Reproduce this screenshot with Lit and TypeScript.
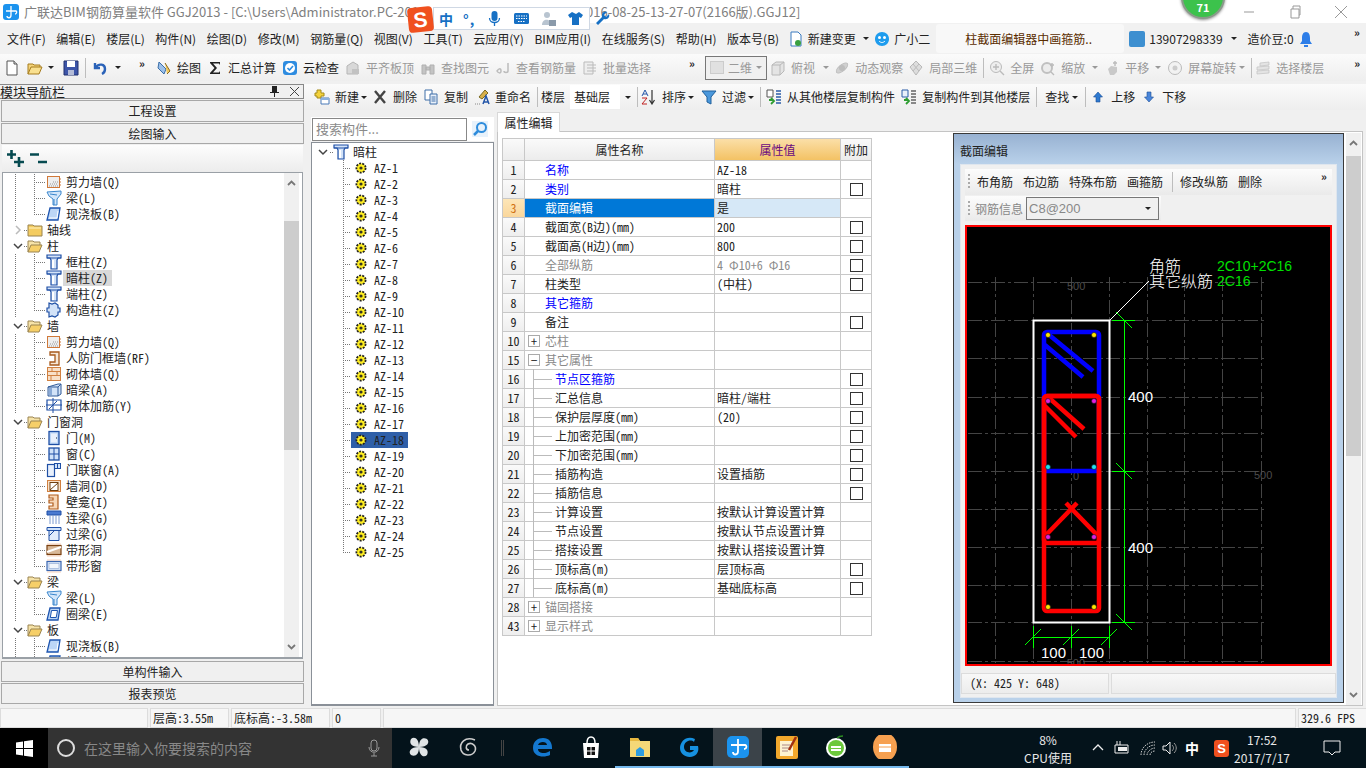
import { LitElement, html, css, svg } from "lit";
import { customElement } from "lit/decorators.js";

const icons: any = {
  doc: svg`<path d="M3 1h7l3 3v11H3z" fill="#fff" stroke="#555"/><path d="M10 1v3h3" fill="#ddd" stroke="#555"/>`,
  open: svg`<path d="M1 14V4h5l1 1h6v2" fill="#f5d47a" stroke="#a67c1e"/><path d="M1 14l3-7h11l-3 7z" fill="#f9e08f" stroke="#a67c1e"/>`,
  save: svg`<path d="M1 1h14v14H1z" fill="#3d55a8" stroke="#20306e"/><path d="M4 1h8v6H4z" fill="#fff"/><path d="M5 10h6v5H5z" fill="#b5bdd8"/>`,
  undo: svg`<path d="M3 3v5h5M3.500 7.500C7 3 13 4 13 9c0 2-1 4-3 5" fill="none" stroke="#2a62b8" stroke-width="2.400"/>`,
  draw: svg`<path d="M3 2l7 7-2 5-6-6z" fill="#9cc0ea" stroke="#3a6ea8"/><path d="M9 3l5 8-3 3" fill="#f0c860" stroke="#8a6a1e"/>`,
  cloud: svg`<rect x="1" y="1" width="14" height="14" rx="3" fill="#2e8ce0"/><circle cx="8" cy="8" r="5" fill="#fff"/><path d="M5.500 8l2 2 3.500-4" fill="none" stroke="#2e8ce0" stroke-width="1.600"/>`,
  gplate: svg`<path d="M2 14V6l6-4 5 3v9z" fill="#d8d8d8" stroke="#b5b5b5"/><path d="M7 9h7v5H7z" fill="#c2c2c2"/>`,
  gbino: svg`<path d="M2 5h4v9H2zM10 5h4v9h-4zM6 7h4v3H6z" fill="#c4c4c4" stroke="#b0b0b0"/>`,
  grebar: svg`<path d="M2 11c2-3 4-3 4 0s-3 2-4 0zM13 3v8c0 2-4 2-4 0" fill="none" stroke="#bcbcbc" stroke-width="1.500"/>`,
  gbatch: svg`<path d="M2 2h9v12H2z" fill="#eee" stroke="#bbb"/><path d="M5 5h9M5 8h9M5 11h9" stroke="#bbb"/>`,
  gcube: svg`<path d="M2 5l4-3h8v9l-4 4H2z" fill="#e4e4e4" stroke="#b8b8b8"/><path d="M2 5h8v10M10 5l4-3" fill="none" stroke="#b8b8b8"/>`,
  gorbit: svg`<ellipse cx="8" cy="8" rx="7" ry="3" transform="rotate(-40 8 8)" fill="#d0d0d0" stroke="#bbb"/><circle cx="8" cy="8" r="3" fill="#bdbdbd"/>`,
  gcube2: svg`<path d="M8 1l6 6-6 8-6-8z" fill="#ddd" stroke="#b8b8b8"/><path d="M5 4l6 7M11 4l-6 7" stroke="#bbb"/>`,
  gfull: svg`<circle cx="7" cy="7" r="5.500" fill="#eee" stroke="#bbb"/><path d="M4 7h6M7 4v6M11 11l4 4" stroke="#bbb" stroke-width="1.400"/>`,
  gzoom: svg`<circle cx="7" cy="8" r="5" fill="#ececec" stroke="#c0c0c0" stroke-width="2"/><path d="M11 12l3 3M12 3v4M10 5h4" stroke="#bbb" stroke-width="1.400"/>`,
  gpan: svg`<path d="M4 9l3-3 6 1v5l-3 3H6z" fill="#c9c9c9"/><path d="M11 1v5M9 3h4" stroke="#bbb" stroke-width="1.400"/>`,
  grot: svg`<circle cx="8" cy="8" r="6.500" fill="#f2f2f2" stroke="#bbb"/><circle cx="8" cy="8" r="2.500" fill="#ccc"/>`,
  gfloor: svg`<path d="M5 3l9-1v3l-9 1zM2 7l12-1v3L2 10zM2 11l12-1v3l-12 1z" fill="#e4e4e4" stroke="#c2c2c2" stroke-width=".7"/>`,
  add: svg`<path d="M3 1h4v3h3v3H7v2H3V7H1V4h2z" fill="#f4d23c" stroke="#a48a18"/><path d="M7 9h8v6H7z" fill="#fff" stroke="#4a7ab8"/><path d="M7 9h8v2H7z" fill="#8ab0de"/>`,
  del: svg`<path d="M3 2l10 12M13 2L3 14" stroke="#444" stroke-width="2.400"/>`,
  copy: svg`<path d="M2 1h7v10H2z" fill="#fff" stroke="#3f6fa8"/><path d="M7 5h7v10H7z" fill="#e8f0fa" stroke="#3f6fa8"/><path d="M8.500 8h4M8.500 10h4M8.500 12h4" stroke="#3f6fa8"/>`,
  rename: svg`<path d="M5 8l6-7 3 3-6 6z" fill="#d8b04a" stroke="#7a6a20"/><path d="M9 15l3-8 3 8M10 13h4" fill="none" stroke="#2456a8" stroke-width="1.500"/><path d="M1 15h6" stroke="#888" stroke-dasharray="1 1"/>`,
  sort: svg`<path d="M1 7l3-6 3 6M2 5h4" fill="none" stroke="#2456a8"/><path d="M1 9h5l-5 6h5" fill="none" stroke="#c02020"/><path d="M11 1v13M8.500 11l2.500 4 2.500-4" fill="none" stroke="#333" stroke-width="1.200"/>`,
  filter: svg`<path d="M1 2h14L10 8v7l-4-2V8z" fill="#4a98dc" stroke="#20609c"/>`,
  cpfrom: svg`<path d="M1 1h6v7H1z" fill="#fff" stroke="#555"/><path d="M3 11h4M5 9l3 3-3 3" fill="none" stroke="#2c9c30" stroke-width="1.800"/><path d="M10 2h5M10 5h5M10 8h5M10 11h5M10 14h5" stroke="#2a5ca8" stroke-width="1.500"/>`,
  cpto: svg`<path d="M1 1h6v7H1z" fill="#e8f0fa" stroke="#2a5ca8"/><path d="M3 11h4M5 9l3 3-3 3" fill="none" stroke="#2c9c30" stroke-width="1.800"/><path d="M10 2h5M10 5h5M10 8h5M10 11h5M10 14h5" stroke="#666" stroke-width="1.500"/>`,
  up: svg`<path d="M8 3l4.500 5H10v5H6V8H3.500z" fill="#2e7ad0" stroke="#1c4e96" stroke-width=".6"/>`,
  down: svg`<path d="M8 13l4.500-5H10V3H6v5H3.500z" fill="#4a86da" stroke="#1c4e96" stroke-width=".6"/>`,
  sigma: svg`<path d="M3 2h10v3l-1-1.500H6l4 4.500-4 4.500h6l1-1.500v3H3v-1l4.500-5L3 3z" fill="#222"/>`,
  col: svg`<path d="M1 1h14v3h-3L11 6v9H5V6L4 4H1z" fill="#d3e3f8" stroke="#1e4fa5" stroke-width="1.200"/><path d="M1 4h14" stroke="#1e4fa5"/><path d="M6 6h2v8H6z" fill="#fff"/>`,
  col2: svg`<path d="M3 1l3 1 3-1 3 2v3h2v4h-2v3l-3 2-3-1-3 1V10H1V6h2z" fill="#d3e3f8" stroke="#1e4fa5" stroke-width="1.200"/>`,
  wall: svg`<rect x="1.500" y="2.500" width="12" height="11" fill="#eee" stroke="#d07838"/><path d="M3 12h9M4 10h8M7 8h5" stroke="#999" stroke-dasharray="1 1"/><path d="M14 4v9" stroke="#d07838" stroke-dasharray="2 1"/>`,
  beam: svg`<path d="M1 2l14-1v3l-4 5v6H7V9L3 6z" fill="#d3e6fa" stroke="#3a86cc"/><path d="M4 4l7 1M8 9v6" stroke="#3a86cc"/>`,
  slab: svg`<path d="M4 2h10l-2 12H1z" fill="#bcd6f6" stroke="#1e55b0" stroke-width="1.300"/><path d="M3 12h8l1-7" fill="none" stroke="#fff"/>`,
  brick: svg`<rect x="1.500" y="1.500" width="13" height="13" fill="#f8e0c8" stroke="#d08040"/><path d="M1 5.500h14M1 9.500h14M6 1.500v4M11 5.500v4M5 9.500v5" stroke="#d08040"/>`,
  rf: svg`<path d="M4 2h9v13H4v-3h5V5H4z" fill="#f6e8d8" stroke="#a85a1c" stroke-width="1.300"/>`,
  box: svg`<path d="M2 5l10-3h3v10l-3 2H2z" fill="#d3e3f8" stroke="#315a98"/><path d="M2 5h10v9M12 5l3-3" fill="none" stroke="#315a98"/><path d="M3 6h3v7H3z" fill="#8aaad6"/>`,
  reb: svg`<path d="M1 2h14v10H1z" fill="#fff" stroke="#1e4fa5" stroke-width="1.200"/><path d="M0 7h16M7 0v15M3 11l8-8" stroke="#1e4fa5"/>`,
  door: svg`<rect x="3" y="1.500" width="10" height="13" fill="#bcd6f6" stroke="#1e4fa5" stroke-width="1.300"/><rect x="5" y="3.500" width="6" height="9" fill="#e8f0fc"/><path d="M10 8h1" stroke="#123"/>`,
  win: svg`<rect x="3" y="2" width="10" height="12" fill="#cfe2fa" stroke="#1e4fa5" stroke-width="1.300"/><path d="M8 2v12M3 8h10" stroke="#1e4fa5"/>`,
  dw: svg`<rect x="1.500" y="2.500" width="7" height="12" fill="#e8f0fc" stroke="#1e4fa5" stroke-width="1.200"/><rect x="8.500" y="1.500" width="6" height="5" fill="#cfe2fa" stroke="#1e4fa5"/><path d="M11.500 1.500v5" stroke="#1e4fa5"/>`,
  hole: svg`<rect x="1.500" y="2.500" width="13" height="11" fill="#f8e0c8" stroke="#d08040"/><rect x="4" y="4.500" width="8" height="8" fill="#fff" stroke="#704010"/><path d="M4 12l8-7" stroke="#704010"/>`,
  niche: svg`<path d="M3 1h9v14H3v-3h4V9H3V6h4V4H3z" fill="#f8d8b8" stroke="#b05c1c" stroke-width="1.200"/>`,
  lb: svg`<path d="M1 1h14v4H1z" fill="#4a7ad0" stroke="#1e4fa5"/><path d="M4 5v9M7 5v9M10 5v9M13 5v9" stroke="#7a9ad0"/>`,
  lintel: svg`<path d="M1 1.500h14v3H1z" fill="#cfe2fa" stroke="#1e4fa5"/><path d="M3 4.500h10v10H3z" fill="#e0ecfc" stroke="#1e4fa5"/><path d="M3 10l5-5" stroke="#1e4fa5"/>`,
  sh: svg`<rect x="1" y="1" width="14" height="14" fill="#fce8dc"/><rect x="1" y="3.500" width="14" height="9" fill="#d8b898" stroke="#7a4010" stroke-width="1.200"/><path d="M1 10l14-5" stroke="#fff" stroke-width="2"/>`,
  sw: svg`<rect x="1" y="1" width="14" height="14" fill="#fce8dc"/><rect x="1" y="3.500" width="14" height="9" fill="#dce8fa" stroke="#3a66b0" stroke-width="1.200"/><rect x="3" y="5.500" width="10" height="5" fill="#f2f6fc" stroke="#8aa4d0" stroke-width=".6"/>`,
  ring: svg`<path d="M4 2h10l-2 12H1z" fill="#bcd6f6" stroke="#1e55b0" stroke-width="1.300"/><path d="M5.500 4.500h6l-1.300 7H4.300z" fill="#fff" stroke="#1e55b0"/>`,
  gear: svg`<circle cx="8" cy="8" r="4.600" fill="#ffee20" stroke="#222" stroke-width="1.800" stroke-dasharray="2 1.200"/><circle cx="8" cy="8" r="1.600" fill="#332"/>`,
};

const ic = (n: string) => html`<svg class="i" viewBox="0 0 16 16">${icons[n]}</svg>`;

const folder = (open: boolean) => html`<svg class="i" viewBox="0 0 16 16">
  ${open
    ? svg`<path d="M1 14V3h5l1 1h6v3" fill="#f6e3a8" stroke="#9a8450"/><path d="M1 14l3-7h11l-3 7z" fill="#f6cf68" stroke="#9a8450"/>`
    : svg`<path d="M1 14V3h5l1 1h8v10z" fill="#f4cc60" stroke="#9a8450"/><path d="M2 6h12" stroke="#fff2c0"/>`}
</svg>`;

const chev = (open: boolean) => html`<svg class="chev" viewBox="0 0 10 10">
  <path d=${open ? "M1 3l4 4 4-4" : "M3 1l4 4-4 4"} fill="none" stroke=${open ? "#444" : "#bbb"} stroke-width="1.500"/>
</svg>`;

const tb1: any[] = [
  { ic: "doc", ml: 4 }, { ic: "open", ml: 7 }, { caret: 1, ml: 5 }, { ic: "save", ml: 9 }, { sep: 1, ml: 6 },
  { ic: "undo", ml: 6 }, { caret: 1, ml: 7 }, { more: 1, ml: 18 },
  { ic: "draw", t: "绘图", ml: 9 }, { ic: "sigma", t: "汇总计算", ml: 6 }, { ic: "cloud", t: "云检查", ml: 6 },
  { ic: "gplate", t: "平齐板顶", ml: 6, g: 1 }, { ic: "gbino", t: "查找图元", ml: 6, g: 1 },
  { ic: "grebar", t: "查看钢筋量", ml: 6, g: 1 }, { ic: "gbatch", t: "批量选择", ml: 6, g: 1 },
  { more: 1, ml: 38 }, { combo: "二维", ml: 8 },
  { ic: "gcube", t: "俯视", ml: 3, g: 1 }, { caret: 1, ml: 8, g: 1 }, { ic: "gorbit", t: "动态观察", ml: 5, g: 1 },
  { ic: "gcube2", t: "局部三维", ml: 5, g: 1 }, { sep: 1, ml: 6 }, { ic: "gfull", t: "全屏", ml: 5, g: 1 },
  { ic: "gzoom", t: "缩放", ml: 6, g: 1 }, { caret: 1, ml: 7, g: 1 }, { ic: "gpan", t: "平移", ml: 6, g: 1 },
  { caret: 1, ml: 6, g: 1 }, { ic: "grot", t: "屏幕旋转", ml: 6, g: 1 }, { caret: 1, ml: 3, g: 1 }, { sep: 1, ml: 6 },
  { ic: "gfloor", t: "选择楼层", ml: 3, g: 1 }, { more: 1, ml: 30 },
];

const tb2: any[] = [
  { ic: "add", t: "新建", ml: 3 }, { caret: 1, ml: 2 }, { ic: "del", t: "删除", ml: 5 }, { ic: "copy", t: "复制", ml: 6 },
  { ic: "rename", t: "重命名", ml: 6 }, { sep: 1, ml: 6 }, { t: "楼层", ml: 3 }, { field: "基础层", ml: 5 }, { caret: 1, ml: 5 },
  { sep: 1, ml: 6 }, { ic: "sort", t: "排序", ml: 3 }, { caret: 1, ml: 2 }, { ic: "filter", t: "过滤", ml: 7 }, { caret: 1, ml: 2 },
  { sep: 1, ml: 6 }, { ic: "cpfrom", t: "从其他楼层复制构件", ml: 5 }, { ic: "cpto", t: "复制构件到其他楼层", ml: 6 },
  { sep: 1, ml: 6 }, { t: "查找", ml: 8 }, { caret: 1, ml: 3 }, { sep: 1, ml: 7 }, { ic: "up", t: "上移", ml: 4 }, { ic: "down", t: "下移", ml: 6 },
];

const menus = ["文件(F)", "编辑(E)", "楼层(L)", "构件(N)", "绘图(D)", "修改(M)", "钢筋量(Q)", "视图(V)", "工具(T)", "云应用(Y)", "BIM应用(I)", "在线服务(S)", "帮助(H)", "版本号(B)"];

// [label, icon, last child?] ; folder rows have open flag instead
const nav: any[] = [
  ["剪力墙(Q)", "wall"], ["梁(L)", "beam"], ["现浇板(B)", "slab", 1],
  { f: "轴线", open: false }, { f: "柱", open: true },
  ["框柱(Z)", "col"], ["暗柱(Z)", "col", 0, 1], ["端柱(Z)", "col"], ["构造柱(Z)", "col2", 1],
  { f: "墙", open: true },
  ["剪力墙(Q)", "wall"], ["人防门框墙(RF)", "rf"], ["砌体墙(Q)", "brick"], ["暗梁(A)", "box"], ["砌体加筋(Y)", "reb", 1],
  { f: "门窗洞", open: true },
  ["门(M)", "door"], ["窗(C)", "win"], ["门联窗(A)", "dw"], ["墙洞(D)", "hole"], ["壁龛(I)", "niche"], ["连梁(G)", "lb"], ["过梁(G)", "lintel"], ["带形洞", "sh"], ["带形窗", "sw", 1],
  { f: "梁", open: true },
  ["梁(L)", "beam"], ["圈梁(E)", "ring", 1],
  { f: "板", open: true },
  ["现浇板(B)", "slab"], ["螺旋板(B)", "slab"],
];

// num, name, value, checkbox, kind: b blue / g grey / s selected; sub; tree + or -
const props: any[] = [
  [1, "名称", "AZ-18", 0, "b"], [2, "类别", "暗柱", 1, "b"], [3, "截面编辑", "是", 0, "s"],
  [4, "截面宽(B边)(mm)", "200", 1], [5, "截面高(H边)(mm)", "800", 1], [6, "全部纵筋", "4 Φ10+6 Φ16", 1, "g"],
  [7, "柱类型", "(中柱)", 1], [8, "其它箍筋", "", 0, "b"], [9, "备注", "", 1],
  [10, "芯柱", "", 0, "g", 0, "+"], [15, "其它属性", "", 0, "g", 0, "−"],
  [16, "节点区箍筋", "", 1, "b", 1], [17, "汇总信息", "暗柱/端柱", 1, "", 1], [18, "保护层厚度(mm)", "(20)", 1, "", 1],
  [19, "上加密范围(mm)", "", 1, "", 1], [20, "下加密范围(mm)", "", 1, "", 1], [21, "插筋构造", "设置插筋", 1, "", 1],
  [22, "插筋信息", "", 1, "", 1], [23, "计算设置", "按默认计算设置计算", 0, "", 1], [24, "节点设置", "按默认节点设置计算", 0, "", 1],
  [25, "搭接设置", "按默认搭接设置计算", 0, "", 1], [26, "顶标高(m)", "层顶标高", 1, "", 1], [27, "底标高(m)", "基础底标高", 1, "", 1],
  [28, "锚固搭接", "", 0, "g", 0, "+"], [43, "显示样式", "", 0, "g", 0, "+"],
];

const gridY = [283, 321, 359, 398, 434, 472, 510, 548, 586, 623, 662];
const gridX = [995, 1033, 1071, 1109, 1147, 1184, 1222, 1261];
const dots: any[] = [[336, "#ffe600"], [402, "#e020e0"], [468, "#20e0f0"], [538, "#e020e0"], [608, "#ffe600"]];

const tick = (x: number, y: number) => svg`<line x1=${x - 8} y1=${y - 8} x2=${x + 8} y2=${y + 8} />`;
const tick2 = (x: number, y: number) => svg`<line x1=${x - 8} y1=${y + 8} x2=${x + 8} y2=${y - 8} />`;

const cad = () => html`<svg class="cad" viewBox="967 228 363 437">
  <g stroke="#444" stroke-dasharray="14 3 3 3" fill="none" shape-rendering="crispEdges">
    ${gridY.map((y) => svg`<line x1="968" y1=${y} x2="1266" y2=${y} />`)}
    ${gridX.map((x) => svg`<line x1=${x} y1="278" x2=${x} y2="664" />`)}
  </g>
  <g fill="#4c4c4c" font-family="Liberation Sans, sans-serif" font-size="11">
    <text x="1067" y="291">500</text><text x="1254" y="480">500</text><text x="1073" y="481">0</text><text x="1063" y="668">-500</text>
  </g>
  <rect x="1033.500" y="321.500" width="76" height="302" fill="none" stroke="#fff" stroke-width="2"/>
  <g fill="none" stroke="#0000ff" stroke-width="4.500">
    <rect x="1044" y="333" width="55" height="139" rx="3"/>
    <line x1="1048" y1="335" x2="1093" y2="372"/><line x1="1045" y1="346" x2="1083" y2="378"/>
  </g>
  <g fill="none" stroke="#ff0000" stroke-width="4.500">
    <rect x="1044" y="397" width="55" height="147" rx="3"/>
    <rect x="1044" y="397" width="55" height="215" rx="3"/>
    <line x1="1048" y1="398" x2="1084" y2="430"/><line x1="1045" y1="407" x2="1076" y2="438"/>
    <line x1="1045" y1="537" x2="1077" y2="504"/><line x1="1098" y1="537" x2="1066" y2="504"/>
  </g>
  ${dots.map(([y, c]) => svg`
    <circle cx="1048" cy=${y} r="2.500" fill=${c} stroke="#111" stroke-width=".6"/>
    <circle cx="1094" cy=${y} r="2.500" fill=${c} stroke="#111" stroke-width=".6"/>`)}
  <g stroke="#00ff00" fill="none">
    <g shape-rendering="crispEdges">
      <line x1="1124" y1="321" x2="1124" y2="623"/>
      <line x1="1112" y1="321" x2="1135" y2="321"/><line x1="1112" y1="472" x2="1135" y2="472"/><line x1="1112" y1="623" x2="1135" y2="623"/>
      <line x1="1033" y1="638" x2="1109" y2="638"/>
      <line x1="1033" y1="627" x2="1033" y2="649"/><line x1="1071" y1="627" x2="1071" y2="649"/><line x1="1109" y1="627" x2="1109" y2="649"/>
    </g>
    ${tick(1124, 321)}${tick(1124, 472)}${tick(1124, 623)}
    ${tick2(1033, 638)}${tick2(1071, 638)}${tick2(1109, 638)}
  </g>
  <line x1="1110" y1="321" x2="1149" y2="282" stroke="#fff"/>
  <g fill="#fff" font-size="16" font-family="Noto Sans CJK SC, sans-serif" font-weight="300">
    <text x="1149" y="273">角筋</text><text x="1149" y="288">其它纵筋</text>
  </g>
  <g fill="#00e000" font-size="14" font-family="Liberation Sans, sans-serif">
    <text x="1217" y="272">2C10+2C16</text><text x="1217" y="287">2C16</text>
  </g>
  <g fill="#fff" font-size="15" font-family="Liberation Sans, sans-serif">
    <text x="1128" y="403">400</text><text x="1128" y="554">400</text><text x="1041" y="659">100</text><text x="1079" y="659">100</text>
  </g>
</svg>`;

@customElement("app-root")
export class AppRoot extends LitElement {
  static styles = css`
    :host {
      display: block;
      position: relative;
      width: 1366px;
      height: 768px;
      overflow: hidden;
      background: #f0f0f0;
      font: 12px/16px "Noto Sans CJK SC", "Liberation Sans", sans-serif;
      color: #222;
    }
    * { box-sizing: border-box; }
    .i { width: 16px; height: 16px; flex: none; display: block; }
    .mono { font-feature-settings: "hwid"; }

    .title { height: 23px; background: #fff; display: flex; align-items: center; color: #808080; font-size: 13px; white-space: nowrap; }
    .logo { width: 16px; height: 16px; margin: 0 5px 0 3px; flex: none; }
    .title .t1 { width: 382px; flex: none; }
    .title .t2 { margin-left: 180px; }
    .winbtns { margin-left: auto; display: flex; gap: 26px; padding-right: 15px; }
    .winbtns svg { width: 20px; height: 14px; display: block; }

    .menu { height: 31px; display: flex; align-items: center; padding-left: 7px; white-space: nowrap; background: #f1f1f1; }
    .menu .m { margin-right: 10.600px; }
    .menu .ib { display: flex; align-items: center; gap: 4px; }
    .news { width: 188px; height: 29px; margin: 0 5px 0 6px; background: #f8f8f8; color: #5a2d00; display: flex; align-items: center; padding-left: 29px; border-radius: 3px; }
    .uavatar { width: 16px; height: 16px; background: #3d8fd0; border-radius: 2px; margin-right: 4px; flex: none; }
    .caret { width: 0; height: 0; border: 3px solid transparent; border-top: 3px solid #222; border-bottom: 0; flex: none; }
    .caret.gray { border-top-color: #999; }
    .more { width: 8px; font-size: 11px; line-height: 10px; font-weight: bold; flex: none; letter-spacing: -1px; align-self: flex-start; margin-top: 4px; }

    .bar { display: flex; align-items: center; white-space: nowrap; background: linear-gradient(#fbfbfb, #eeeeee); }
    .tb1 { height: 27px; }
    .item { display: flex; align-items: center; gap: 5px; flex: none; }
    .item.gray { color: #999; }
    .sep { width: 1px; height: 20px; background: #bdbdbd; flex: none; }
    .combo { width: 62px; height: 24px; border: 1px solid #777; background: #f0f0f0; display: flex; align-items: center; color: #999; padding: 0 4px; flex: none; gap: 4px; }
    .combo .sq { width: 14px; height: 13px; background: #e0e0e0; border: 1px solid #ccc; }
    .combo .caret { margin-left: auto; }
    .field { width: 50px; height: 24px; background: #fff; padding-left: 4px; line-height: 24px; flex: none; }

    .main { height: 624px; margin-top: 3px; display: flex; }

    .left { width: 304px; flex: none; display: flex; flex-direction: column; padding-left: 1px; }
    .lhead { height: 15px; display: flex; align-items: center; font-size: 13px; margin: 0 0 1px -1px; border-top: 1px solid #888; border-bottom: 1px solid #888; border-right: 1px solid #888; flex: none; }
    .lhead .pin { margin-left: auto; margin-right: 10px; width: 9px; height: 11px; }
    .lhead .x { margin-right: 3px; width: 11px; height: 11px; }
    .lbtn { height: 21px; border: 1px solid #a8a8a8; background: #f0f0f0; display: flex; align-items: center; justify-content: center; flex: none; margin-bottom: 1px; }
    .lbtn.tall { height: 22px; }
    .expand { height: 27px; margin: 0 1px; display: flex; align-items: center; gap: 6px; padding-left: 5px; background: linear-gradient(#fdfdfd, #ececec); flex: none; }
    .expand svg { width: 17px; height: 17px; display: block; }
    .ltree { height: 487px; margin: 0 1px 2px; border: 1px solid #9aa0a6; border-bottom-width: 2px; background: #fff; display: flex; overflow: hidden; flex: none; }
    .rows { flex: 1; overflow: hidden; padding-top: 1px; }
    .row { height: 16px; display: flex; align-items: center; white-space: nowrap; }
    .chev { width: 10px; height: 10px; margin-left: 10px; flex: none; }
    .dot { width: 3px; height: 16px; margin-left: 1px; flex: none; background: repeating-linear-gradient(to right, #777 0 1px, transparent 1px 2px) 0 50% / 100% 1px no-repeat; }
    .row .flab { margin-left: 4px; }
    .guide1 { width: 19px; margin-left: 12px; height: 16px; flex: none; background: repeating-linear-gradient(to bottom, #777 0 1px, transparent 1px 2px) 0 0 / 1px 100% no-repeat; }
    .elbow { width: 12px; height: 16px; flex: none; background:
      repeating-linear-gradient(to bottom, #777 0 1px, transparent 1px 2px) 0 0 / 1px 100% no-repeat,
      repeating-linear-gradient(to right, #777 0 1px, transparent 1px 2px) 0 50% / 100% 1px no-repeat; }
    .elbow.last { background:
      repeating-linear-gradient(to bottom, #777 0 1px, transparent 1px 2px) 0 0 / 1px 50% no-repeat,
      repeating-linear-gradient(to right, #777 0 1px, transparent 1px 2px) 0 50% / 100% 1px no-repeat; }
    .lab { margin-left: 1px; padding: 0 4px 0 3px; line-height: 16px; }
    .lab.on { background: #d9d9d9; }
    .sbar { width: 15px; margin: 0 3px 0 0; background: #f0f0f0; display: flex; flex-direction: column; flex: none; }
    .sbar .arr { height: 21px; display: flex; align-items: center; justify-content: center; flex: none; }
    .sbar .arr svg { width: 9px; height: 7px; }
    .sbar .thumb { background: #cdcdcd; flex: none; }

    .right { flex: 1; display: flex; flex-direction: column; min-width: 0; padding-left: 7px; }
    .tb2 { height: 26px; flex: none; margin-left: -7px; padding-left: 7px; background: linear-gradient(#fbfbfb, #eeeeee); }
    .content { flex: 1; display: flex; min-height: 0; }

    .mid { width: 183px; flex: none; display: flex; flex-direction: column; padding-top: 7px; }
    .search { display: flex; height: 24px; flex: none; margin-bottom: 1px; background: #fff; padding-left: 1px; align-items: center; }
    .search .inp { width: 155px; height: 23px; border: 1px solid #888; color: #8a8a8a; padding: 2px 3px; flex: none; font-size: 13px; }
    .search svg { width: 16px; height: 16px; margin-left: 5px; }
    .mtree { flex: 1; border: 1px solid #8a9098; border-width: 1px 1px 2px; background: #fff; padding-top: 1px; overflow: hidden; margin-bottom: 2px; }
    .mtree .chev { margin-left: 6px; }
    .mtree .root .dot { margin-left: 2px; width: 3px; }
    .mtree .gh { width: 8px; margin-left: 31px; }
    .azw { display: flex; align-items: center; gap: 5px; padding: 0 4px 0 2px; }
    .azw.on { background: #2f5fa8; }

    .prop { flex: 1; margin-left: 3px; min-width: 0; display: flex; flex-direction: column; margin-bottom: 2px; margin-right: 3px; padding-top: 2px; }
    .tabrow { height: 20px; display: flex; flex: none; border-bottom: 1px solid #c4c4c4; }
    .tab { width: 63px; background: #fff; text-align: center; line-height: 19px; border: 1px solid #d8d8d8; border-bottom: 0; margin-bottom: -1px; }
    .pbody { flex: 1; background: #fff; display: flex; border: 1px solid #c4c4c4; border-top: 0; padding-top: 6px; min-height: 0; }
    .tablewrap { flex: 1; padding-left: 4px; }
    .sbar.p { margin: -5px 1px 0 0; }

    .grid { display: grid; grid-template-columns: 22px 190px 126px 31px; width: 370px; border-top: 1px solid #c8c8c8; border-left: 1px solid #c8c8c8; }
    .cell { height: 19px; border-right: 1px solid #c8c8c8; border-bottom: 1px solid #c8c8c8; display: flex; align-items: center; white-space: nowrap; padding-left: 2px; }
    .hd { height: 22px; background: linear-gradient(#fafafa, #ececec); justify-content: center; padding-left: 0; }
    .hd.val { background: linear-gradient(#fbdfa8, #f3c264); color: #6a0a80; }
    .num { background: linear-gradient(#fafafa, #eeeeee); justify-content: center; padding-left: 0; }
    .num.s { background: linear-gradient(#fde6b8, #fad79c); color: #d07010; }
    .name { padding-left: 20px; position: relative; }
    .name.sub { padding-left: 30px; }
    .name.hasbox { padding-left: 3px; }
    .name.sub::before { content: ""; position: absolute; left: 8px; top: -1px; bottom: 0; border-left: 1px solid #bbb; }
    .name.sub::after { content: ""; position: absolute; left: 8px; width: 19px; top: 9px; border-top: 1px solid #bbb; }
    .b { color: #0000ff; }
    .g { color: #8a8a8a; }
    .name.s { background: #0078d7; color: #fff; }
    .val.s { background: #d6e8f7; }
    .att { justify-content: center; padding-left: 0; }
    .cb { width: 13px; height: 13px; border: 1px solid #333; background: #fff; }
    .box { width: 12px; height: 12px; border: 1px solid #aaa; margin-right: 5px; display: flex; align-items: center; justify-content: center; color: #222; line-height: 10px; font-size: 12px; flex: none; }

    .dlg { position: absolute; left: 953px; top: 133px; width: 391px; height: 570px; border: 1px solid #3a3a3a; background: #b9d1ea; display: flex; flex-direction: column; padding: 0 6px 4px; }
    .dlgtitle { height: 30px; margin: 0 -6px; padding: 9px 0 0 6px; background: linear-gradient(#98b2d2, #b9d1ea); flex: none; color: #222; }
    .dlgin { flex: 1; background: #f0f0f0; padding: 2px 4px 0; display: flex; flex-direction: column; min-height: 0; border: 1px solid #dfe6ee; }
    .dtb { height: 26px; flex: none; background: linear-gradient(#fcfcfc, #eaeaea); display: flex; align-items: center; padding-left: 3px; white-space: nowrap; margin: 2px 0 0; }
    .grip { width: 2px; height: 16px; flex: none; background: repeating-linear-gradient(to bottom, #aaa 0 2px, transparent 2px 4px); margin-right: 7px; }
    .dtb .c { margin-right: 10px; }
    .dtb .sep { margin: 0 7px 0 -1px; }
    .dtb .more { margin-left: auto; margin-right: 3px; margin-top: 2px; }
    .drow { height: 25px; display: flex; align-items: center; width: 196px; background: linear-gradient(#fcfcfc, #eaeaea); padding-left: 3px; color: #888; flex: none; margin-top: 1px; }
    .drow .grip { margin-right: 5px; }
    .drow .sel { width: 133px; height: 23px; margin-left: 3px; border: 1px solid #777; background: #f0f0f0; padding: 0 2px; display: flex; align-items: center; justify-content: space-between; font-family: "Liberation Sans", sans-serif; font-size: 13px; }
    .drow .sel .caret { margin-right: 5px; }
    .cadbox { height: 441px; flex: none; margin: 4px 0 0; background: #000; border: 2px solid #f00; }
    .cad { width: 100%; height: 100%; display: block; }
    .dst { height: 21px; margin: 7px -4px 0; display: flex; gap: 2px; flex: none; }
    .dst div { background: linear-gradient(#f8f8f8, #ececec); border: 1px solid #dcdcdc; line-height: 18px; }
    .dst .a { width: 148px; padding-left: 8px; }
    .dst .b2 { flex: 1; }

    .status { height: 20px; display: flex; gap: 2px; white-space: nowrap; background: #f0f0f0; }
    .status div { background: #f6f6f6; border: 1px solid #dcdcdc; line-height: 18px; padding-left: 2px; flex: none; font-size: 12px; }

    .task { height: 40px; background: #04131b; display: flex; align-items: center; color: #e8e8e8; position: relative; }
    .start { width: 48px; height: 40px; background: #000; display: flex; align-items: center; justify-content: center; flex: none; }
    .start svg { width: 17px; height: 17px; }
    .sbox { width: 344px; height: 40px; background: #333; flex: none; display: flex; align-items: center; padding-left: 9px; color: #888; font-size: 14px; }
    .sbox .ring { width: 18px; height: 18px; border: 2px solid #ddd; border-radius: 50%; margin-right: 9px; flex: none; }
    .sbox .mic { margin-left: auto; margin-right: 11px; width: 14px; height: 18px; }
    .slot { width: 49px; height: 40px; display: flex; align-items: center; justify-content: center; flex: none; border-bottom: 2px solid transparent; }
    .slot svg { width: 24px; height: 24px; display: block; }
    .slot.run { border-bottom-color: #76b9ed; }
    .slot.act { background: #3b4349; border-bottom-color: #76b9ed; }
    .tsep { width: 25px; flex: none; height: 40px; display: flex; align-items: center; padding-left: 9px; }
    .tsep i { width: 3px; height: 16px; border-left: 1px solid #444; border-right: 1px solid #444; }
    .cpu { width: 60px; margin-left: 109px; text-align: center; line-height: 18px; flex: none; padding-top: 2px; }
    .tray { display: flex; align-items: center; flex: none; margin-left: 12px; }
    .tray svg { width: 16px; height: 16px; display: block; flex: none; }
    .tray .t { margin-left: 8px; }
    .tray .t:first-child { margin-left: 0; }
    .tray .w { margin-left: 10px; }
    .tray .v { margin-left: 6px; }
    .tray .zh { font-size: 14px; font-weight: bold; color: #fff; margin-left: 7px; width: 16px; }
    .tray .sg { margin-left: 13px; width: 15px; height: 17px; background: #f0501e; border-radius: 3px; color: #fff; font: bold 13px/17px "Liberation Sans", sans-serif; text-align: center; display: block; }
    .clock { width: 70px; margin-left: -2px; text-align: center; line-height: 18px; flex: none; padding-top: 2px; }
    .bell { margin-left: 26px; width: 18px; height: 18px; flex: none; }

    .ime { position: absolute; left: 408px; top: 5px; display: flex; height: 28px; align-items: flex-start; }
    .ime .s { width: 25px; height: 25px; background: #f0501e; color: #fff; font: bold 21px/25px "Liberation Sans", sans-serif; text-align: center; border-radius: 4px; transform: rotate(-6deg); margin-top: 2px; position: relative; z-index: 1; }
    .ime .bar2 { width: 157px; height: 23px; margin-top: 2px; background: #fff; border: 1px solid #cfd8e4; display: flex; align-items: center; gap: 12px; padding-left: 5px; color: #1670c4; font-size: 14px; font-weight: bold; }
    .ime svg { width: 15px; height: 15px; display: block; flex: none; }

    .ball { position: absolute; left: 1181px; top: -25px; width: 44px; height: 44px; border-radius: 50%; background: #3cc24c; border: 2px solid #8a9a8a; box-shadow: 0 1px 3px #888; color: #fff; font-size: 11px; font-weight: bold; text-align: center; display: flex; align-items: flex-end; justify-content: center; padding-bottom: 2px; }
  `;

  renderBar(list: any[]) {
    return list.map((it) => {
      const ml = `margin-left:${it.ml}px`;
      if (it.sep) return html`<span class="sep" style=${ml}></span>`;
      if (it.caret) return html`<span class="caret ${it.g ? "gray" : ""}" style=${ml}></span>`;
      if (it.more) return html`<span class="more" style=${ml}>»</span>`;
      if (it.combo) return html`<span class="combo" style=${ml}><span class="sq"></span>${it.combo}<span class="caret gray"></span></span>`;
      if (it.field) return html`<span class="field" style=${ml}>${it.field}</span>`;
      return html`<span class="item ${it.g ? "gray" : ""}" style=${ml}>${it.ic ? ic(it.ic) : ""}${it.t ? html`<span>${it.t}</span>` : ""}</span>`;
    });
  }

  renderNav() {
    return nav.map((n) =>
      n.f
        ? html`<div class="row">${chev(n.open)}<span class="dot"></span>${folder(n.open)}<span class="flab">${n.f}</span></div>`
        : html`<div class="row mono"><span class="guide1"></span><span class="elbow ${n[2] ? "last" : ""}"></span>${ic(n[1])}<span class="lab ${n[3] ? "on" : ""}">${n[0]}</span></div>`
    );
  }

  renderAz() {
    const list = Array.from({ length: 25 }, (_, i) => i + 1);
    return html`
      <div class="row root">${chev(true)}<span class="dot"></span>${ic("col")}<span class="flab">暗柱</span></div>
      ${list.map((n) => html`<div class="row mono">
        <span class="elbow gh ${n === 25 ? "last" : ""}"></span>
        <span class="azw ${n === 18 ? "on" : ""}">${ic("gear")}<span>AZ-${n}</span></span>
      </div>`)}`;
  }

  renderProps() {
    return props.map(([num, name, val, cb, kind, sub, tree]) => html`
      <div class="cell num mono ${kind === "s" ? "s" : ""}">${num}</div>
      <div class="cell name mono ${kind || ""} ${sub ? "sub" : ""} ${tree ? "hasbox" : ""}">
        ${tree ? html`<span class="box">${tree}</span>` : ""}${name}
      </div>
      <div class="cell val mono ${kind === "s" ? "s" : ""} ${kind === "g" ? "g" : ""}">${val}</div>
      <div class="cell att">${cb ? html`<span class="cb"></span>` : ""}</div>`);
  }

  scrollbar(top: number, size: number, cls = "") {
    const arrow = (d: string) => html`<span class="arr"><svg viewBox="0 0 9 7"><path d=${d} fill="none" stroke="#777" stroke-width="1.800"/></svg></span>`;
    return html`<div class="sbar ${cls}">
      ${arrow("M1 5l3.500-3.500L8 5")}
      <div style="height:${top}px;flex:none"></div>
      <div class="thumb" style="height:${size}px"></div>
      <div style="flex:1"></div>
      ${arrow("M1 2l3.500 3.500L8 2")}
    </div>`;
  }

  renderTaskbar() {
    return html`<div class="task">
      <div class="start"><svg viewBox="0 0 17 17"><path d="M0 2.500l7-1v6.500H0zM8 1.300L17 0v8H8zM0 9h7v6.500l-7-1zM8 9h9v8l-9-1.300z" fill="#fff"/></svg></div>
      <div class="sbox"><span class="ring"></span>在这里输入你要搜索的内容
        <svg class="mic" viewBox="0 0 14 18"><rect x="4" y="1" width="6" height="11" rx="3" fill="none" stroke="#999"/><path d="M2 8c0 7 10 7 10 0M7 14v3M4 17h6" fill="none" stroke="#999"/></svg>
      </div>
      <div style="width:2px;flex:none"></div>
      <span class="slot"><svg viewBox="0 0 24 24"><path d="M12 12C4 12 2 8 4 4c3-3 8-1 8 8zM12 12c0-8 4-10 8-8 3 3 1 8-8 8zM12 12c8 0 10 4 8 8-3 3-8 1-8-8zM12 12c0 8-4 10-8 8-3-3-1-8 8-8z" fill="#e0e4e6"/></svg></span>
      <span class="slot"><svg viewBox="0 0 24 24"><path d="M19 5C9 1 3 8 5 15c2 6 11 7 14 1 2-5-3-9-7-7-3 2-2 6 1 6" fill="none" stroke="#ccc" stroke-width="1.600"/></svg></span>
      <span class="tsep"><i></i></span>
      <span class="slot"><svg viewBox="0 0 24 24"><path d="M3 13C3 6 8 3 13 3c6 0 9 4 9 10v1H8c0 5 8 5 12 2v4c-6 3-17 2-17-7zM8 10h9c0-4-8-4-9 0z" fill="#1478d0"/></svg></span>
      <span class="slot"><svg viewBox="0 0 24 24"><path d="M4 8h16l-1 15H5z" fill="#fff"/><path d="M8 8c0-8 8-8 8 0" fill="none" stroke="#fff" stroke-width="1.500"/><path d="M8 12h3.500v3.500H8zM12.500 12H16v3.500h-3.500zM8 16.500h3.500V20H8zM12.500 16.500H16V20h-3.500z" fill="#111"/></svg></span>
      <span class="slot run"><svg viewBox="0 0 24 24"><path d="M2 3h8l2 3h10v16H2z" fill="#f5d878"/><path d="M2 3h8l2 3H2z" fill="#e8b840"/><path d="M8 15l4-3 4 3v6H8z" fill="#2e9ce0"/></svg></span>
      <span class="slot run"><svg viewBox="0 0 24 24"><path d="M18 4C10 0 3 6 3 13s8 11 14 8c4-2 5-6 4-10h-8v4h4c-2 4-10 3-10-3 0-6 7-8 10-5z" fill="#1690e0"/></svg></span>
      <span class="slot act"><svg viewBox="0 0 24 24"><rect x="1" y="1" width="22" height="22" rx="5" fill="#1b93ee"/><path d="M12 4v12c0 5-5 4-5 1M5 10h14c2 0 2 4-1 4" fill="none" stroke="#fff" stroke-width="1.800"/></svg></span>
      <span class="slot run"><svg viewBox="0 0 24 24"><rect x="1" y="1" width="22" height="23" rx="2" fill="#f2a82c"/><path d="M5 6h13v15H5z" fill="#fdf3d0"/><path d="M7 10h8M7 13h8M7 16h6" stroke="#a88"/><path d="M14 15L21 2" stroke="#a03010" stroke-width="2.500"/></svg></span>
      <span class="slot run"><svg viewBox="0 0 24 24"><circle cx="12" cy="13" r="10" fill="#fff"/><circle cx="12" cy="13" r="8" fill="#6cc83c"/><path d="M7 12h10M7 15h10" stroke="#fff" stroke-width="2"/><path d="M13 3c2-2 5-2 6-2" stroke="#2a8a20" stroke-width="1.500" fill="none"/></svg></span>
      <span class="slot run"><svg viewBox="0 0 24 24"><ellipse cx="12" cy="12" rx="12" ry="14" fill="#f6a050"/><path d="M6 9h12v8H6z" fill="#fff"/><path d="M9 9V7h6v2M6 12h12" fill="none" stroke="#f6a050"/></svg></span>
      <div class="cpu">8%<br />CPU使用</div>
      <div class="tray">
        <svg class="t" viewBox="0 0 16 16"><path d="M3 10l5-5 5 5" fill="none" stroke="#eee" stroke-width="1.300"/></svg>
        <svg class="t" viewBox="0 0 16 16"><path d="M1 5h13v8H1z" fill="none" stroke="#eee"/><path d="M4 7h9v4H4z" fill="#eee"/><path d="M3 1v4M6 1v4" stroke="#eee"/></svg>
        <svg class="w" viewBox="0 0 16 16"><path d="M1 15C1 8 7 2 15 2M4 15c0-5 5-10 11-10M7 15c0-3 4-7 8-7M10 15c0-2 2-4 5-4" fill="none" stroke="#ccc" stroke-dasharray="1.500 1"/></svg>
        <svg class="v" viewBox="0 0 16 16"><path d="M1 6h3l4-4v12l-4-4H1z" fill="none" stroke="#eee"/><path d="M10 5c2 2 2 4 0 6M12 3c3 3 3 7 0 10" fill="none" stroke="#999"/></svg>
        <span class="zh">中</span>
        <span class="sg">S</span>
      </div>
      <div class="clock">17:52<br />2017/7/17</div>
      <svg class="bell" viewBox="0 0 18 18"><path d="M1 2h16v11h-5l-3 3-3-3H1z" fill="none" stroke="#eee"/></svg>
    </div>`;
  }

  render() {
    return html`
      <div class="title">
        <svg class="logo" viewBox="0 0 16 16"><rect width="16" height="16" rx="3" fill="#1b93ee"/><path d="M8 2v9c0 4-4 3-4 1M3 7h10c1 0 1 3-1 3" fill="none" stroke="#fff" stroke-width="1.300"/></svg>
        <span class="t1">广联达BIM钢筋算量软件 GGJ2013 - [C:\\Users\\Administrator.PC-201</span>
        <span class="t2">016-08-25-13-27-07(2166版).GGJ12]</span>
        <div class="winbtns">
          <svg viewBox="0 0 20 14"><path d="M5 7h10" stroke="#999"/></svg>
          <svg viewBox="0 0 20 14"><path d="M6 4h8v9H6zM8 4V1h7v9h-1" fill="none" stroke="#999"/></svg>
          <svg viewBox="0 0 20 14"><path d="M4 1l12 12M16 1L4 13" stroke="#999"/></svg>
        </div>
      </div>

      <div class="menu">
        ${menus.map((m) => html`<span class="m">${m}</span>`)}
        <span class="m ib" style="margin-left:-2px">
          <svg class="i" viewBox="0 0 16 16"><path d="M3 1h7l3 3v11H3z" fill="#fff" stroke="#3a7ac0"/><circle cx="10" cy="12" r="3" fill="#3aa040"/></svg>新建变更
          <span class="caret" style="margin-left:3px"></span>
        </span>
        <span class="ib" style="margin-left:-5px">
          <svg class="i" viewBox="0 0 16 16"><path d="M8 1c4 0 7 3 7 7s-3 7-7 7-7-3-7-7 3-7 7-7z" fill="#1e9cee"/><circle cx="5.500" cy="6.500" r="1.500" fill="#fff"/><circle cx="10.500" cy="6.500" r="1.500" fill="#fff"/><path d="M5 10c2 2 4 2 6 0" stroke="#fff" fill="none"/></svg>广小二
        </span>
        <div class="news">柱截面编辑器中画箍筋..</div>
        <span class="uavatar"></span><span>13907298339</span>
        <span class="caret" style="margin:0 11px 0 8px"></span>
        <span>造价豆:0</span>
        <svg class="i" style="margin-left:4px" viewBox="0 0 16 16"><path d="M8 1c3 0 4 3 4 6v3l2 3H2l2-3V7c0-3 1-6 4-6zM6 14h4v2H6z" fill="#2e7ee8"/></svg>
        <span class="more" style="margin-left:auto;margin-right:4px">»</span>
      </div>

      <div class="bar tb1">${this.renderBar(tb1)}</div>

      <div class="main">
        <div class="left">
          <div class="lhead">模块导航栏
            <svg class="pin" viewBox="0 0 9 11"><path d="M2 0h5v6h2v1H5v4H4V7H0V6h2z" fill="#222"/></svg>
            <svg class="x" viewBox="0 0 11 11"><path d="M1 1l9 9M10 1l-9 9" stroke="#444"/></svg>
          </div>
          <div class="lbtn tall">工程设置</div>
          <div class="lbtn">绘图输入</div>
          <div class="expand">
            <svg viewBox="0 0 17 17"><path d="M4.500 0v9M0 4.500h9M12 7v10M7 12h10" stroke="#064a50" stroke-width="2.600"/></svg>
            <svg viewBox="0 0 17 17"><path d="M0 4.500h9M8 12h9" stroke="#064a50" stroke-width="2.600"/></svg>
          </div>
          <div class="ltree">
            <div class="rows">${this.renderNav()}</div>
            ${this.scrollbar(27, 229)}
          </div>
          <div class="lbtn">单构件输入</div>
          <div class="lbtn">报表预览</div>
        </div>

        <div class="right">
          <div class="bar tb2">${this.renderBar(tb2)}</div>
          <div class="content">
            <div class="mid">
              <div class="search">
                <div class="inp">搜索构件...</div>
                <svg viewBox="0 0 16 16"><rect width="16" height="16" fill="#e8f2fb"/><circle cx="9.500" cy="6.500" r="4.500" fill="none" stroke="#2e8cdc" stroke-width="2"/><path d="M6 10l-4 4" stroke="#2e8cdc" stroke-width="2.500"/></svg>
              </div>
              <div class="mtree">${this.renderAz()}</div>
            </div>
            <div class="prop">
              <div class="tabrow"><div class="tab">属性编辑</div></div>
              <div class="pbody">
                <div class="tablewrap">
                  <div class="grid">
                    <div class="cell hd"></div>
                    <div class="cell hd">属性名称</div>
                    <div class="cell hd val">属性值</div>
                    <div class="cell hd">附加</div>
                    ${this.renderProps()}
                  </div>
                </div>
                ${this.scrollbar(2, 300, "p")}
              </div>
            </div>
          </div>
        </div>
      </div>

      <div class="status mono">
        <div style="width:148px"></div>
        <div style="width:79px">层高:3.55m</div>
        <div style="width:99px">底标高:-3.58m</div>
        <div style="width:49px">0</div>
        <div style="width:913px"></div>
        <div style="width:70px">329.6 FPS</div>
      </div>

      ${this.renderTaskbar()}

      <div class="dlg">
        <div class="dlgtitle">截面编辑</div>
        <div class="dlgin">
          <div class="dtb">
            <span class="grip"></span>
            <span class="c">布角筋</span><span class="c">布边筋</span><span class="c">特殊布筋</span><span class="c">画箍筋</span>
            <span class="sep"></span>
            <span class="c">修改纵筋</span><span class="c">删除</span>
            <span class="more">»</span>
          </div>
          <div class="drow">
            <span class="grip"></span>钢筋信息
            <div class="sel">C8@200<span class="caret"></span></div>
          </div>
          <div class="cadbox">${cad()}</div>
          <div class="dst mono"><div class="a">(X: 425 Y: 648)</div><div class="b2"></div></div>
        </div>
      </div>

      <div class="ime">
        <div class="s">S</div>
        <div class="bar2">
          <span>中</span><span style="margin-left:-2px;letter-spacing:1px">°,</span>
          <svg viewBox="0 0 15 15"><rect x="4.500" y="0" width="6" height="10" rx="3" fill="#1670c4"/><path d="M2.500 7c0 6 10 6 10 0M7.500 12v3" fill="none" stroke="#1670c4" stroke-width="1.300"/></svg>
          <svg viewBox="0 0 15 15"><rect x="0" y="2" width="15" height="11" rx="1.500" fill="#1670c4"/><path d="M2 5h11M2 7.500h11M4 10.500h7" stroke="#fff" stroke-dasharray="1.500 1"/></svg>
          <svg viewBox="0 0 15 15"><circle cx="6" cy="4" r="3" fill="#b8c4d0"/><path d="M1 14c0-7 9-7 9 0z" fill="#b8c4d0"/><rect x="8" y="9" width="7" height="6" fill="#8a9aaa"/></svg>
          <svg viewBox="0 0 15 15"><path d="M4 1L0 4l2 3 2-1v8h7V6l2 1 2-3-4-3-3 2z" fill="#1670c4"/></svg>
          <svg viewBox="0 0 15 15"><path d="M14 3l-3 3-2-2 3-3C9 0 6 2 7 6l-6 6 2 2 6-6c4 1 6-2 5-5z" fill="#1670c4"/></svg>
        </div>
      </div>
      <div class="ball">71</div>
    `;
  }
}
